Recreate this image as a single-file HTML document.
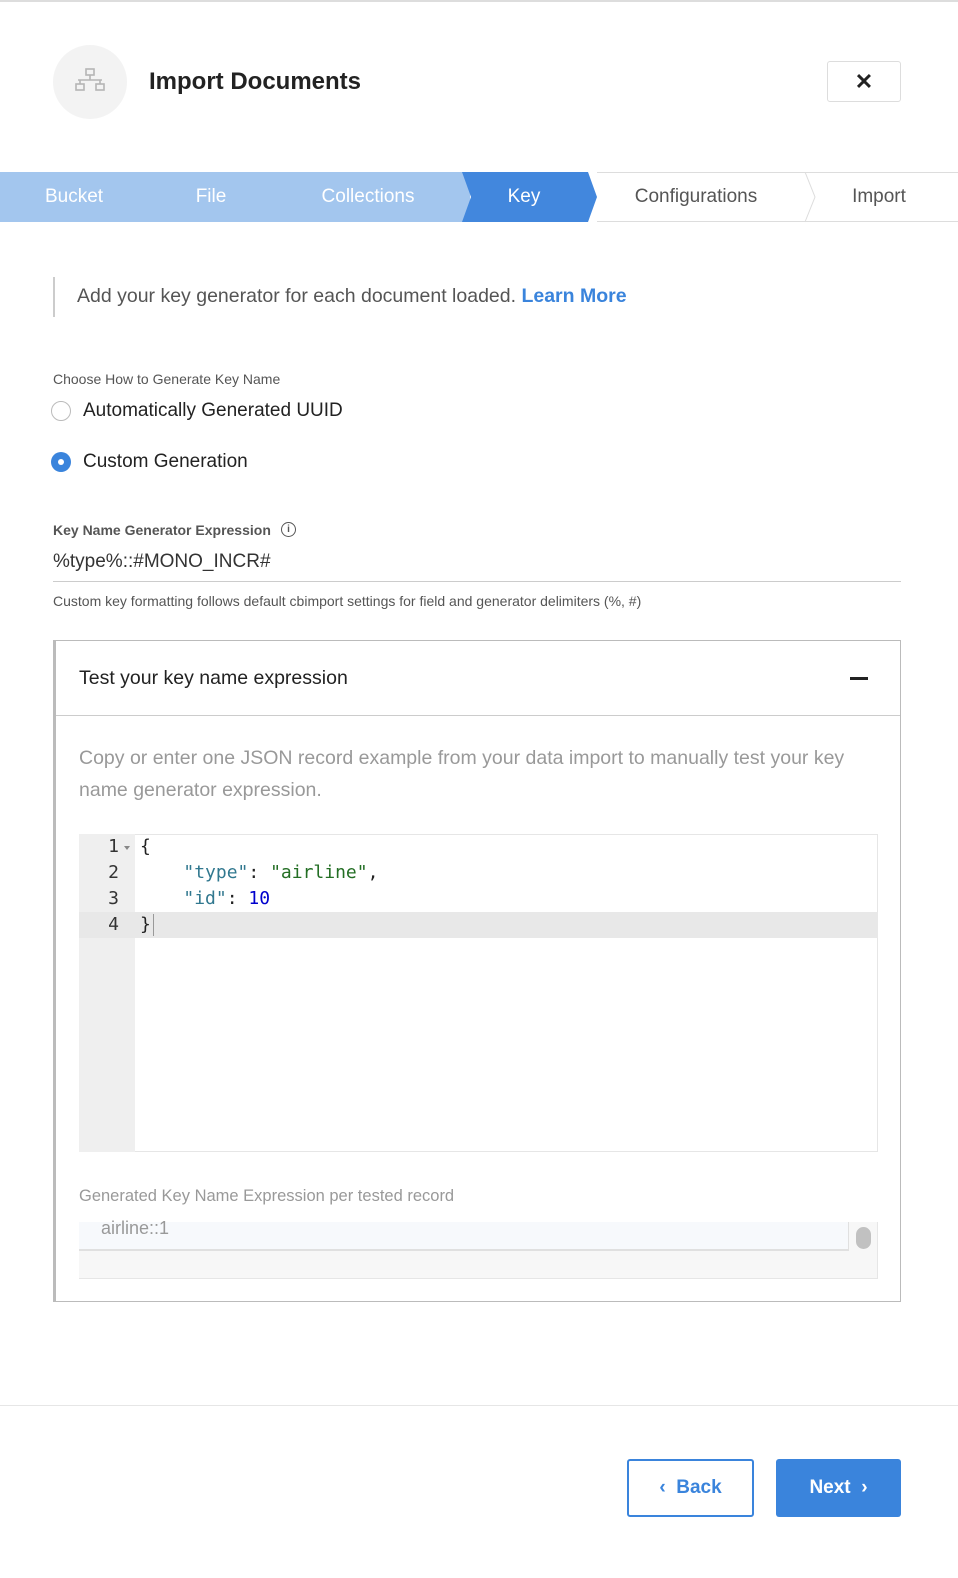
<!DOCTYPE html>
<html><head><meta charset="utf-8"><style>
*{box-sizing:border-box;margin:0;padding:0}
body{width:958px;height:1578px;background:#fff;font-family:"Liberation Sans",sans-serif;color:#222;position:relative;overflow:hidden}
.abs{position:absolute}
.step{position:absolute;top:172px;height:50px;line-height:50px;font-size:19px;text-align:center}
.mono{font-family:"DejaVu Sans Mono","Liberation Mono",monospace;font-size:18px}
</style></head><body>
<div class="abs" style="left:0;top:0;width:958px;height:2px;background:#ddd"></div>
<div class="abs" style="left:53px;top:45px;width:74px;height:74px;border-radius:50%;background:#f3f3f3"></div>
<svg class="abs" style="left:74px;top:67px" width="32" height="30" viewBox="0 0 32 30" fill="none" stroke="#b5b5b5" stroke-width="1.6">
<rect x="12" y="2" width="8" height="6"/><path d="M16 8v5M4 13h24M6 13v4M26 13v4"/><rect x="2" y="17" width="8" height="6"/><rect x="22" y="17" width="8" height="6"/>
</svg>
<div class="abs" style="left:149px;top:68px;font-size:24px;font-weight:bold;color:#222">Import Documents</div>
<div class="abs" style="left:827px;top:61px;width:74px;height:41px;border:1px solid #ddd;border-radius:3px;text-align:center;line-height:40px;font-size:22px;font-weight:bold">✕</div>

<svg class="abs" style="left:0;top:172px" width="958" height="51">
<rect x="0" y="0" width="470" height="50" fill="#a3c6ee"/>
<polygon points="462,0 588,0 597,25 588,50 462,50 471,25" fill="#4287dd"/>
<path d="M597,0.5 H958 M597,49.5 H958" stroke="#ddd"/>
<path d="M805,0 L815,25 L805,50" stroke="#ddd" fill="none"/>
</svg>
<div class="step" style="left:14px;width:120px;color:#fff">Bucket</div>
<div class="step" style="left:161px;width:100px;color:#fff">File</div>
<div class="step" style="left:298px;width:140px;color:#fff">Collections</div>
<div class="step" style="left:484px;width:80px;color:#fff">Key</div>
<div class="step" style="left:616px;width:160px;color:#555">Configurations</div>
<div class="step" style="left:829px;width:100px;color:#555">Import</div>

<div class="abs" style="left:53px;top:277px;width:2px;height:40px;background:#ccc"></div>
<div class="abs" style="left:77px;top:285px;font-size:19.5px;color:#555">Add your key generator for each document loaded. <b style="color:#3a84dc">Learn More</b></div>

<div class="abs" style="left:53px;top:371px;font-size:14px;color:#555">Choose How to Generate Key Name</div>
<div class="abs" style="left:51px;top:401px;width:20px;height:20px;border:1.5px solid #bbb;border-radius:50%"></div>
<div class="abs" style="left:83px;top:400px;font-size:19px">Automatically Generated UUID</div>
<div class="abs" style="left:51px;top:452px;width:20px;height:20px;border-radius:50%;background:#3a84dc"><div style="margin:7px;width:6px;height:6px;border-radius:50%;background:#fff"></div></div>
<div class="abs" style="left:83px;top:451px;font-size:19px">Custom Generation</div>

<div class="abs" style="left:53px;top:522px;font-size:14px;color:#555;font-weight:bold">Key Name Generator Expression</div>
<div class="abs" style="left:281px;top:522px;width:15px;height:15px;border:1.3px solid #555;border-radius:50%;font-size:10px;text-align:center;line-height:13px;color:#555;font-weight:bold">i</div>
<div class="abs" style="left:53px;top:551px;font-size:19px;color:#333">%type%::#MONO_INCR#</div>
<div class="abs" style="left:53px;top:581px;width:848px;height:1px;background:#ccc"></div>
<div class="abs" style="left:53px;top:593px;font-size:14px;color:#555">Custom key formatting follows default cbimport settings for field and generator delimiters (%, #)</div>

<div class="abs" style="left:53px;top:640px;width:848px;height:662px;border:1px solid #bbb;border-left:3px solid #bbb"></div>
<div class="abs" style="left:56px;top:715px;width:844px;height:1px;background:#ccc"></div>
<div class="abs" style="left:79px;top:667px;font-size:19.5px;color:#222">Test your key name expression</div>
<div class="abs" style="left:850px;top:677px;width:18px;height:3px;background:#222"></div>
<div class="abs" style="left:79px;top:742px;width:790px;font-size:19.5px;color:#999;line-height:32px">Copy or enter one JSON record example from your data import to manually test your key name generator expression.</div>

<div class="abs" style="left:79px;top:834px;width:799px;height:318px;border:1px solid #e6e6e6;background:#fff"></div>
<div class="abs" style="left:79px;top:834px;width:56px;height:318px;background:#efefef"></div>
<div class="abs" style="left:79px;top:912px;width:799px;height:26px;background:#e8e8e8"></div>
<div class="abs mono" style="left:79px;top:834px;width:40px;text-align:right;line-height:26px;color:#333">1<br>2<br>3<br>4</div>
<div class="abs" style="left:124px;top:846px;width:0;height:0;border-left:3px solid transparent;border-right:3px solid transparent;border-top:4px solid #888"></div>
<div class="abs mono" style="left:140px;top:834px;line-height:26px;white-space:pre;color:#222">{
    <span style="color:#31788f">"type"</span>: <span style="color:#236e24">"airline"</span>,
    <span style="color:#31788f">"id"</span>: <span style="color:#0000cd">10</span>
}</div>
<div class="abs" style="left:153px;top:914px;width:1px;height:22px;background:#999"></div>

<div class="abs" style="left:79px;top:1187px;font-size:16.5px;color:#999">Generated Key Name Expression per tested record</div>
<div class="abs" style="left:79px;top:1222px;width:799px;height:57px;background:#f7f7f7;border-bottom:1px solid #e6e6e6;border-right:1px solid #e6e6e6"></div>
<div class="abs" style="left:79px;top:1222px;width:770px;height:29px;background:#f7f9fc;border-bottom:2px solid #e0e0e0;border-right:1px solid #e0e0e0"></div>
<div class="abs" style="left:101px;top:1218px;font-size:18px;color:#999">airline::1</div>
<div class="abs" style="left:856px;top:1227px;width:15px;height:22px;border-radius:8px;background:#c1c1c1"></div>

<div class="abs" style="left:0;top:1405px;width:958px;height:1px;background:#e6e6e6"></div>
<div class="abs" style="left:627px;top:1459px;width:127px;height:58px;border:2px solid #3a84dc;border-radius:3px;color:#3a84dc;font-size:19px;font-weight:bold;text-align:center;line-height:54px">‹&nbsp; Back</div>
<div class="abs" style="left:776px;top:1459px;width:125px;height:58px;background:#3a84dc;border-radius:3px;color:#fff;font-size:19px;font-weight:bold;text-align:center;line-height:58px">Next&nbsp; ›</div>
</body></html>
